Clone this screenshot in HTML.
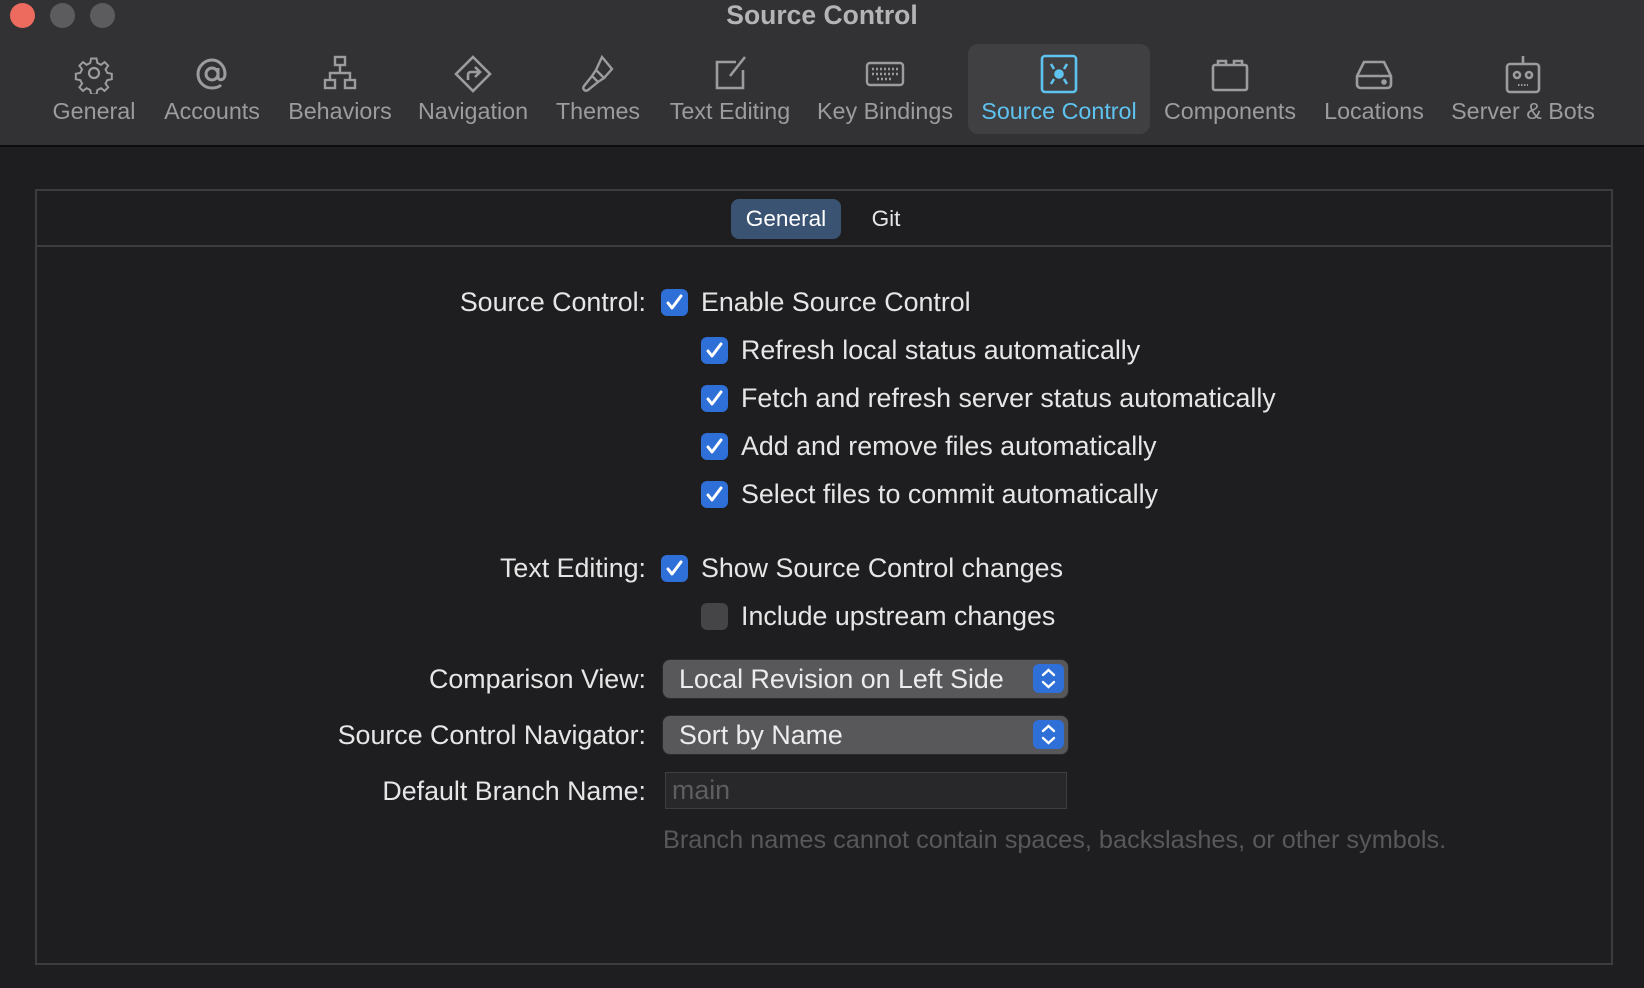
<!DOCTYPE html>
<html><head><meta charset="utf-8"><style>
*{margin:0;padding:0;box-sizing:border-box}
body{width:1644px;height:988px;background:#1e1e20;font-family:"Liberation Sans",sans-serif;position:relative;overflow:hidden}
.tb{position:absolute;left:0;top:0;width:1644px;height:147px;background:#323234;border-bottom:2px solid #0c0c0c}
.tl{position:absolute;top:3px;width:25px;height:25px;border-radius:50%}
.title{position:absolute;top:0;left:0;width:1644px;text-align:center;font-weight:bold;font-size:26.5px;color:#b4b4b6;line-height:30px}
.it{position:absolute;top:44px;height:90px;text-align:center;color:#9c9c9e;font-size:23.3px}
.it svg{position:absolute;top:10px;left:50%;margin-left:-20px}
.it span{position:absolute;top:54px;left:-20px;right:-20px;white-space:nowrap}
.abs{position:absolute}
.lbl{position:absolute;right:998px;color:#e6e6e6;font-size:26.8px;line-height:30px;white-space:nowrap}
.txt{position:absolute;color:#e6e6e6;font-size:26.8px;line-height:30px;white-space:nowrap}
.cb{position:absolute;width:27px;height:27px;border-radius:6px;background:#2f6fd8}
.cb svg{position:absolute;left:4px;top:4px}
.pop{position:absolute;left:663px;width:405px;height:38px;background:#58585b;border-radius:7px;color:#ececec;font-size:26.8px;line-height:38px;padding-left:16px;box-shadow:0 0 0 1px #2a2a2c}
.pop .b{position:absolute;right:4px;top:4px;width:31px;height:29px;border-radius:6px;background:#2f6fd8}
</style></head><body>
<div class="tb">
<div class="tl" style="left:10px;background:#ed6a5e"></div>
<div class="tl" style="left:50px;background:#5c5c5e"></div>
<div class="tl" style="left:90px;background:#5c5c5e"></div>
<div class="title">Source Control</div>

<div class="it" style="left:44px;width:100px"><svg width="40" height="40" viewBox="0 0 40 40" fill="none" stroke="#9c9c9e" stroke-width="2.2"><path d="M17 4h6l1 5 4 2 4-3 4 4-3 4 2 4 5 1v6l-5 1-2 4 3 4-4 4-4-3-4 2-1 5h-6l-1-5-4-2-4 3-4-4 3-4-2-4-5-1v-6l5-1 2-4-3-4 4-4 4 3 4-2z" transform="scale(.9) translate(2 1)"/><circle cx="20" cy="19" r="5"/></svg><span>General</span></div>
<div class="it" style="left:162px;width:100px"><svg width="40" height="40" viewBox="0 0 40 40" fill="none" stroke="#9c9c9e" stroke-width="3"><circle cx="20" cy="20" r="6"/><path d="M26 14v9c0 4 7 4 7-3 0-8-6-14-13-14S6 12 6 20s6 14 14 14c4 0 7-1 9-3"/></svg><span>Accounts</span></div>
<div class="it" style="left:285px;width:110px"><svg width="40" height="40" viewBox="0 0 40 40" fill="none" stroke="#9c9c9e" stroke-width="2.4"><rect x="15" y="3" width="10" height="8"/><rect x="5" y="26" width="10" height="8"/><rect x="25" y="26" width="10" height="8"/><path d="M20 11v8M10 26v-7h20v7"/></svg><span>Behaviors</span></div>
<div class="it" style="left:413px;width:120px"><svg width="40" height="40" viewBox="0 0 40 40" fill="none" stroke="#9c9c9e" stroke-width="2.6"><path d="M20 3l17 17-17 17L3 20z"/><path d="M15 26v-5c0-2 1-3 3-3h8M22 13l5 5-5 5"/></svg><span>Navigation</span></div>
<div class="it" style="left:548px;width:100px"><svg width="40" height="40" viewBox="0 0 40 40" fill="none" stroke="#9c9c9e" stroke-width="2.4"><path d="M24 3l10 12-8 9-8-8zM18 16l8 8-6 4-6-6zM14 22l-8 10c-2 3 1 6 4 4l10-8"/></svg><span>Themes</span></div>
<div class="it" style="left:665px;width:130px"><svg width="40" height="40" viewBox="0 0 40 40" fill="none" stroke="#9c9c9e" stroke-width="2.6"><path d="M26 8H7v26h26V16"/><path d="M35 3L20 22"/></svg><span>Text Editing</span></div>
<div class="it" style="left:815px;width:140px"><svg width="40" height="40" viewBox="0 0 40 40" fill="none" stroke="#9c9c9e" stroke-width="2.4"><rect x="2" y="9" width="36" height="22" rx="3"/><path d="M7 15h26M7 20h26M12 25h16" stroke-dasharray="2 2"/></svg><span>Key Bindings</span></div>
<div class="it" style="left:968px;width:182px;background:#404043;border-radius:10px;color:#5fc3f0"><svg width="40" height="40" viewBox="0 0 40 40" fill="none" stroke="#5fc3f0" stroke-width="2.6"><rect x="3" y="2" width="34" height="36" rx="3"/><circle cx="20" cy="20" r="3.5" fill="#5fc3f0"/><path d="M12 10l3 5M28 10l-3 5M12 30l3-5M28 30l-3-5"/></svg><span>Source Control</span></div>
<div class="it" style="left:1170px;width:120px"><svg width="40" height="40" viewBox="0 0 40 40" fill="none" stroke="#9c9c9e" stroke-width="2.6"><rect x="3" y="11" width="34" height="25" rx="2"/><path d="M8 11V7h8v4M24 11V7h8v4"/></svg><span>Components</span></div>
<div class="it" style="left:1320px;width:108px"><svg width="40" height="40" viewBox="0 0 40 40" fill="none" stroke="#9c9c9e" stroke-width="2.6"><path d="M10 8h20l7 14v8c0 3-2 4-4 4H7c-2 0-4-1-4-4v-8z"/><path d="M3 22h34"/><circle cx="30" cy="28" r="1.5" fill="#9c9c9e"/></svg><span>Locations</span></div>
<div class="it" style="left:1448px;width:150px"><svg width="40" height="40" viewBox="0 0 40 40" fill="none" stroke="#9c9c9e" stroke-width="2.6"><rect x="4" y="10" width="32" height="28" rx="3"/><path d="M20 10V2"/><circle cx="14" cy="21" r="3"/><circle cx="26" cy="21" r="3"/><path d="M15 31h10" stroke-width="2" stroke-dasharray="1.5 1.5"/></svg><span>Server &amp; Bots</span></div>
</div>

<div class="abs" style="left:35px;top:189px;width:1578px;height:776px;border:2px solid #3c3c3e"></div>
<div class="abs" style="left:35px;top:245px;width:1578px;height:2px;background:#3c3c3e"></div>
<div class="abs" style="left:731px;top:199px;width:110px;height:40px;border-radius:8px;background:#3b5373;color:#fff;font-size:22.6px;line-height:40px;text-align:center">General</div>
<div class="abs" style="left:856px;top:199px;width:60px;color:#e6e6e6;font-size:22.6px;line-height:40px;text-align:center">Git</div>

<div class="lbl" style="top:287px">Source Control:</div>
<div class="lbl" style="top:553px">Text Editing:</div>
<div class="lbl" style="top:664px">Comparison View:</div>
<div class="lbl" style="top:720px">Source Control Navigator:</div>
<div class="lbl" style="top:776px">Default Branch Name:</div>

<div class="cb" style="left:661px;top:289px"><svg width="19" height="19" viewBox="0 0 19 19"><path d="M3 10l4 5 9-12" fill="none" stroke="#fff" stroke-width="3" stroke-linecap="round" stroke-linejoin="round"/></svg></div>
<div class="txt" style="left:701px;top:287px">Enable Source Control</div>
<div class="cb" style="left:701px;top:337px"><svg width="19" height="19" viewBox="0 0 19 19"><path d="M3 10l4 5 9-12" fill="none" stroke="#fff" stroke-width="3" stroke-linecap="round" stroke-linejoin="round"/></svg></div>
<div class="txt" style="left:741px;top:335px">Refresh local status automatically</div>
<div class="cb" style="left:701px;top:385px"><svg width="19" height="19" viewBox="0 0 19 19"><path d="M3 10l4 5 9-12" fill="none" stroke="#fff" stroke-width="3" stroke-linecap="round" stroke-linejoin="round"/></svg></div>
<div class="txt" style="left:741px;top:383px">Fetch and refresh server status automatically</div>
<div class="cb" style="left:701px;top:433px"><svg width="19" height="19" viewBox="0 0 19 19"><path d="M3 10l4 5 9-12" fill="none" stroke="#fff" stroke-width="3" stroke-linecap="round" stroke-linejoin="round"/></svg></div>
<div class="txt" style="left:741px;top:431px">Add and remove files automatically</div>
<div class="cb" style="left:701px;top:481px"><svg width="19" height="19" viewBox="0 0 19 19"><path d="M3 10l4 5 9-12" fill="none" stroke="#fff" stroke-width="3" stroke-linecap="round" stroke-linejoin="round"/></svg></div>
<div class="txt" style="left:741px;top:479px">Select files to commit automatically</div>
<div class="cb" style="left:661px;top:555px"><svg width="19" height="19" viewBox="0 0 19 19"><path d="M3 10l4 5 9-12" fill="none" stroke="#fff" stroke-width="3" stroke-linecap="round" stroke-linejoin="round"/></svg></div>
<div class="txt" style="left:701px;top:553px">Show Source Control changes</div>
<div class="cb" style="left:701px;top:603px;background:#454547"></div>
<div class="txt" style="left:741px;top:601px">Include upstream changes</div>

<div class="pop" style="top:660px">Local Revision on Left Side<div class="b"><svg width="31" height="29" viewBox="0 0 31 29" fill="none" stroke="#fff" stroke-width="2.4" stroke-linecap="round"><path d="M10 11l5.5-5 5.5 5M10 18l5.5 5 5.5-5"/></svg></div></div>
<div class="pop" style="top:716px">Sort by Name<div class="b"><svg width="31" height="29" viewBox="0 0 31 29" fill="none" stroke="#fff" stroke-width="2.4" stroke-linecap="round"><path d="M10 11l5.5-5 5.5 5M10 18l5.5 5 5.5-5"/></svg></div></div>
<div class="abs" style="left:665px;top:772px;width:402px;height:37px;background:#28282a;border:1px solid #3e3e40;color:#5e5e60;font-size:26.8px;line-height:35px;padding-left:6px">main</div>
<div class="abs" style="left:663px;top:825px;color:#58585a;font-size:25.3px;line-height:30px;white-space:nowrap">Branch names cannot contain spaces, backslashes, or other symbols.</div>
</body></html>
